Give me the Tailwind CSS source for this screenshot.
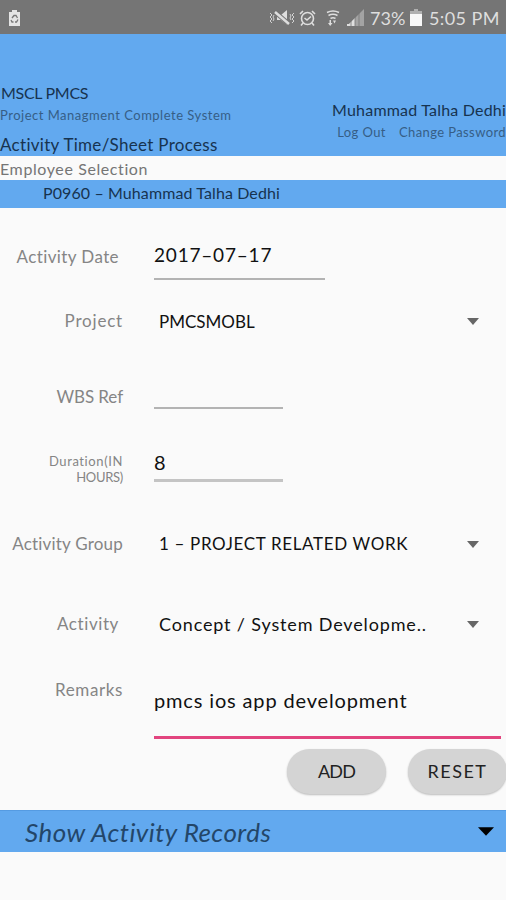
<!DOCTYPE html>
<html lang="en">
<head>
<meta charset="utf-8">
<title>MSCL PMCS</title>
<script src="https://cdn.jsdelivr.net/npm/@tailwindcss/browser@4"></script>
</head>
<body class="w-[506px] h-[900px] overflow-hidden bg-[#fafafa] font-['Lato',sans-serif] text-[#111] whitespace-nowrap">
<div class="h-[34px] bg-[#757575] flex items-center justify-between pl-2 pr-[7px] pt-[2px] text-[#dedede]">
  <svg class="w-[13px] h-[18px]" viewBox="0 0 13 18"><path fill="#e4e4e4" d="M4 1h5v2h3v14H1V3h3z"/><path fill="none" stroke="#777" stroke-width="1.3" d="M4 9l2-2.500h2L9.500 9M10 10.500L8.500 13H7M5.500 13H4l-1-2"/></svg>
  <div class="flex items-center">
    <svg class="w-[26px] h-[18px]" viewBox="0 0 26 18" fill="none" stroke="#d2d2d2" stroke-width="1"><path fill="#dedede" stroke="none" d="M8 6h4l6-5v15l-6-5H8z"/><path stroke="#757575" stroke-width="4.500" d="M6 3l14 12"/><path stroke="#dedede" stroke-width="2.500" d="M6 3l14 12"/><path d="M1 4l2 2-2 2 2 2-2 2 2 2M5 6l-1 2 1 2-1 2M25 4l-2 2 2 2-2 2 2 2-2 2M21 5l1 2-1 2 1 2"/></svg>
    <svg class="w-[17px] h-[18px] ml-[4px]" viewBox="0 0 17 18" fill="none" stroke="#dedede" stroke-width="1.600"><circle cx="8.500" cy="9.500" r="6"/><path d="M5.500 9l2.500 2L12 7.500M1 5l3-3M16 5l-3-3M4 14l-2 2.500M13 14l2 2.500"/></svg>
    <svg class="w-[14px] h-[18px] ml-[10px]" viewBox="0 0 14 18" fill="none" stroke="#dedede" stroke-width="1.500"><path d="M1 3.500q6-3 12 0M2.500 6.500q4.500-2.500 9 0M4.500 9.500q2.500-1.500 5 0"/><path fill="#dedede" stroke="none" d="M2 14h1.500v-3H5v3h1.500l-2.300 3zM7 11.500h3l-1.500 3z"/></svg>
    <svg class="w-[18px] h-[18px] ml-[6px]" viewBox="0 0 18 18"><path fill="#a3a3a3" d="M18 0v17H1z"/><path fill="#dedede" d="M9 9v8H1zM1 15h2v2H1z"/><path stroke="#757575" stroke-width=".8" d="M5 10v7M9 6v11M13 3v14"/></svg>
    <span class="text-[18px] leading-[20px] w-[36px] ml-[6px] tracking-[0px]">73%</span>
    <svg class="w-[12px] h-[18px] ml-[4px]" viewBox="0 0 12 18"><path fill="#b0b0b0" d="M4 0h4v2h4v4H0V2h4z"/><path fill="#f8f8f8" d="M0 5h12v12H0z"/></svg>
    <span class="text-[18px] leading-[20px] w-[70px] ml-[7px] tracking-[0.4px]">5:05 PM</span>
  </div>
</div>
<header class="h-[122px] bg-[#62a9ef] flex justify-between text-[#17334f]">
  <div class="pt-[49px]">
    <div class="h-5 leading-5 text-[16px] pl-px tracking-[-0.3px]">MSCL PMCS</div>
    <div class="h-[22px] leading-[22px] pt-px text-[13px] text-[#365e86] tracking-[0.5px]">Project Managment Complete System</div>
    <div class="mt-[10px] h-5 leading-5 text-[17px] tracking-[0.3px]">Activity Time/Sheet Process</div>
  </div>
  <div class="pt-[66px] flex flex-col items-end">
    <div class="h-5 leading-5 text-[16px] tracking-[0.2px]">Muhammad Talha Dedhi</div>
    <div class="mt-[2px] h-5 leading-5 text-[13px] text-[#365e86] flex gap-[13px]"><span class="tracking-[0.4px]">Log Out</span><span class="tracking-[0.4px]">Change Password</span></div>
  </div>
</header>
<div class="h-6 leading-[26px] text-[16px] text-[#757575] tracking-[0.6px]">Employee Selection</div>
<div class="h-7 leading-[26px] bg-[#62a9ef] pl-[43px] text-[16px] text-[#17334f] tracking-[0.1px]">P0960 – Muhammad Talha Dedhi</div>

<main class="h-[602px] text-[#858585] text-[17px]">
  <div class="h-[72px] flex">
    <div class="w-[119px] pt-[39px] text-right leading-5 tracking-[0.4px]">Activity Date</div>
    <div class="ml-[35px] w-[171px] h-[72px] pt-[35px] border-b-2 border-[#b3b3b3] text-[19px] leading-6 text-[#111] tracking-[0.8px]">2017–07–17</div>
  </div>
  <div class="h-[82px] flex items-center">
    <div class="w-[123px] text-right leading-5 tracking-[0.8px]">Project</div>
    <div class="ml-[36px] w-[308px] pt-[2px] text-[17px] leading-6 text-[#111] tracking-[0px]">PMCSMOBL</div>
    <svg class="w-[12px] h-[7px]" viewBox="0 0 12 7"><path fill="#666" d="M0 0h12L6 7z"/></svg>
  </div>
  <div class="h-[47px] flex">
    <div class="w-[123px] pt-[25px] text-right leading-5 tracking-[-0.1px]">WBS Ref</div>
    <div class="ml-[31px] w-[129px] h-[47px] border-b-2 border-[#b3b3b3]"></div>
  </div>
  <div class="h-[73px] flex">
    <div class="w-[123px] pt-[44px] text-right text-[13px] leading-4 tracking-[0.6px]">Duration(IN<br><span class="tracking-[-0.3px]">HOURS)</span></div>
    <div class="ml-[31px] w-[129px] h-[73px] pt-[41px] border-b-[3px] border-[#c4c4c4] text-[20px] leading-6 text-[#111]">8</div>
  </div>
  <div class="mt-[22px] h-[80px] flex items-center">
    <div class="w-[123px] text-right leading-5 tracking-[0.2px]">Activity Group</div>
    <div class="ml-[36px] w-[308px] text-[17px] leading-6 text-[#111] tracking-[0.65px]">1 – PROJECT RELATED WORK</div>
    <svg class="w-[12px] h-[7px]" viewBox="0 0 12 7"><path fill="#666" d="M0 0h12L6 7z"/></svg>
  </div>
  <div class="h-[80px] flex items-center">
    <div class="w-[119px] text-right leading-5 tracking-[0.6px]">Activity</div>
    <div class="ml-[40px] w-[308px] text-[18px] leading-6 text-[#111] tracking-[0.85px]">Concept / System Developme..</div>
    <svg class="w-[12px] h-[7px]" viewBox="0 0 12 7"><path fill="#666" d="M0 0h12L6 7z"/></svg>
  </div>
  <div class="h-[75px] flex">
    <div class="w-[123px] pt-[16px] text-right leading-5 tracking-[0.6px]">Remarks</div>
    <div class="ml-[31px] w-[347px] h-[75px] pt-[24px] border-b-[3px] border-[#e2457f] text-[20px] leading-6 text-[#111] tracking-[0.85px]">pmcs ios app development</div>
  </div>
  <div class="pt-[10px] pl-[287px] flex gap-[22px] text-[18px] text-[#222]">
    <div class="shrink-0 w-[99px] h-[45px] rounded-full bg-[#d4d4d4] shadow-[0_1px_2px_rgba(0,0,0,0.25)] flex items-center justify-center tracking-[-0.8px]">ADD</div>
    <div class="shrink-0 w-[99px] h-[45px] rounded-full bg-[#d4d4d4] shadow-[0_1px_2px_rgba(0,0,0,0.25)] flex items-center justify-center tracking-[1.5px]">RESET</div>
  </div>
</main>
<div class="h-[42px] bg-[#62a9ef] border-t border-[#559be2] flex items-center justify-between pl-[25px] pr-[12px]">
  <span class="italic text-[26px] leading-7 text-[#234669] tracking-[0.45px]">Show Activity Records</span>
  <svg class="w-[16px] h-[9px]" viewBox="0 0 17 9"><path d="M0 0h17L8.500 9z"/></svg>
</div>
</body>
</html>
